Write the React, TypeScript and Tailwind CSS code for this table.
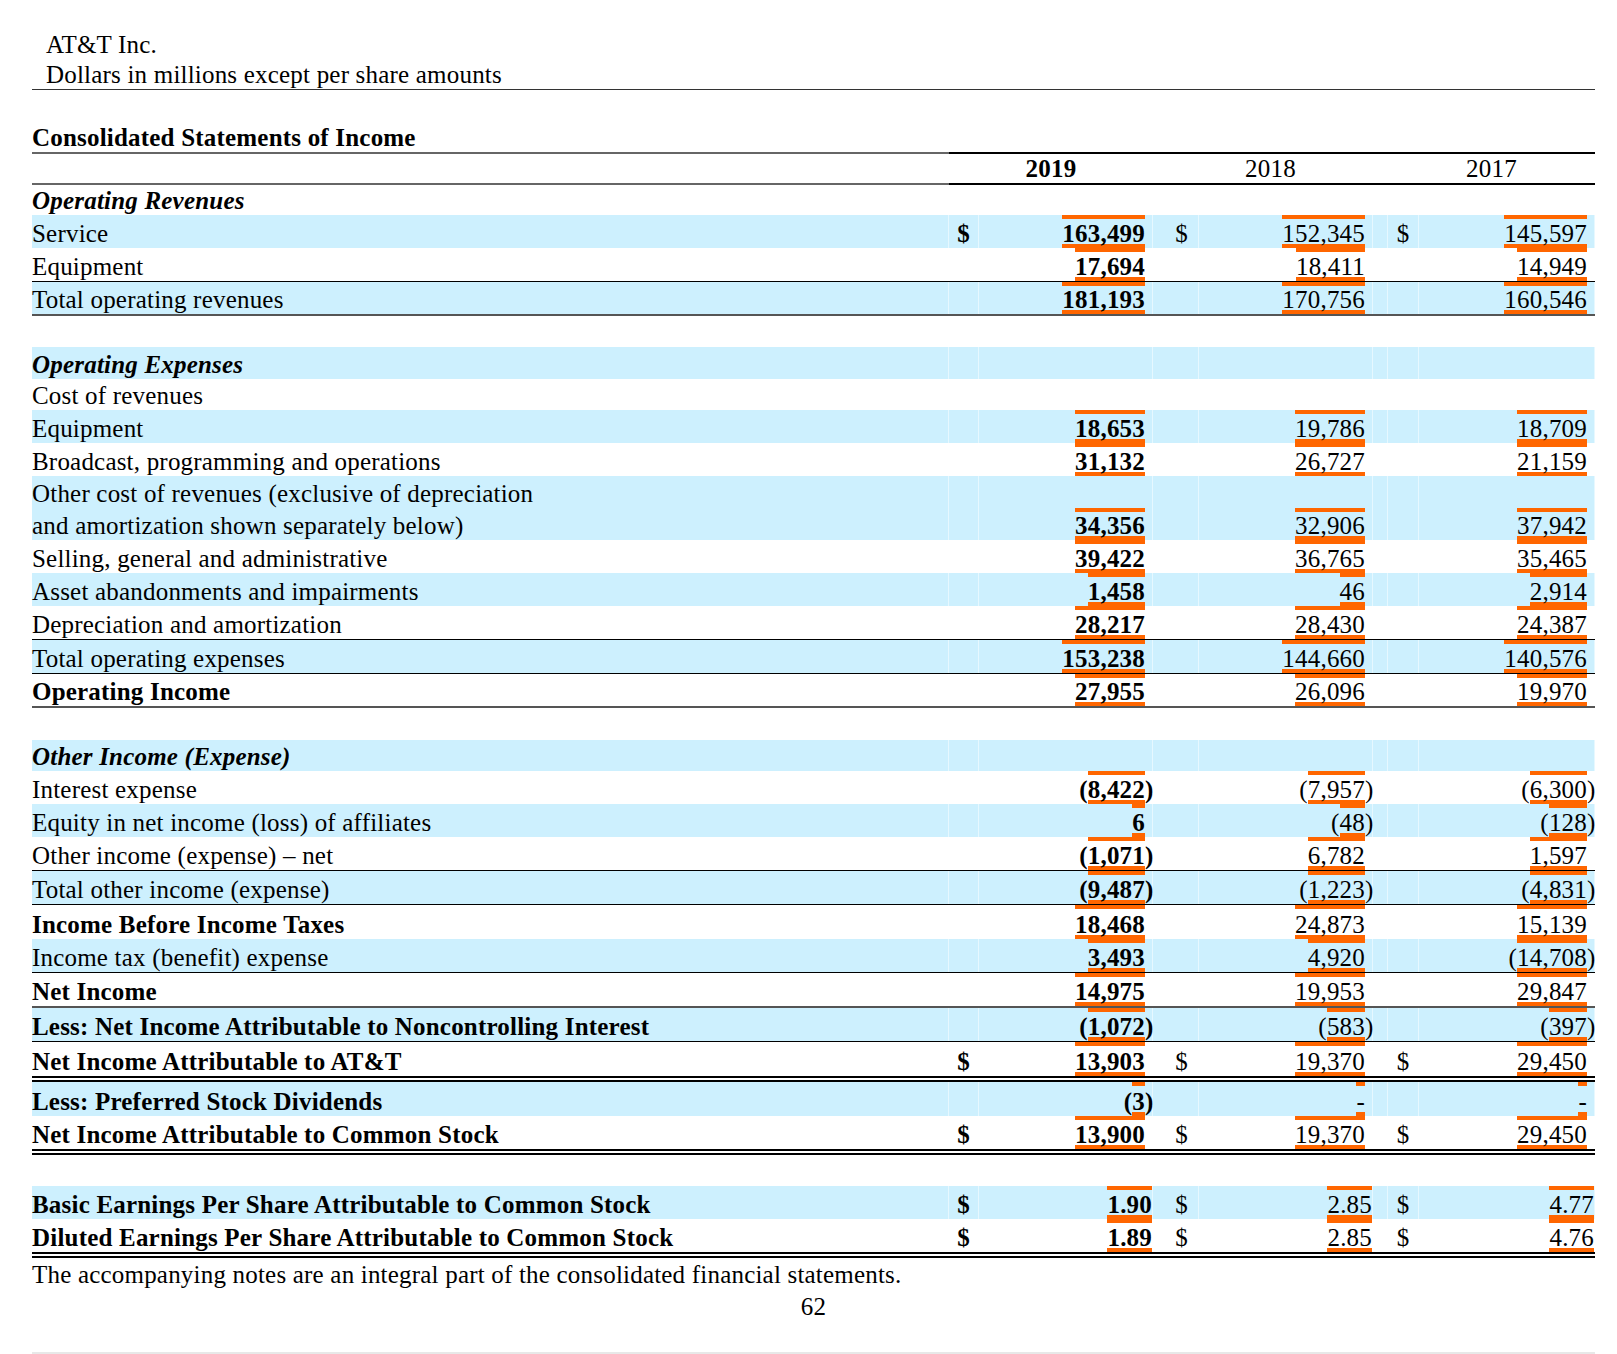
import React from 'react';

type Row = {
  label: string;
  kind?: 'head' | 'bold';
  blue?: boolean;
  h: string;
  line?: 'single' | 'gray' | 'double';
  vals?: [string, string, string];
  dollar?: boolean;
  eps?: boolean;
};

const rows: Row[] = [
  { label: 'Operating Revenues', kind: 'head', h: 'h-[30px]' },
  { label: 'Service', blue: true, h: 'h-[33px]', dollar: true, vals: ['163,499', '152,345', '145,597'] },
  { label: 'Equipment', h: 'h-[34px]', line: 'single', vals: ['17,694', '18,411', '14,949'] },
  { label: 'Total operating revenues', blue: true, h: 'h-[34px]', line: 'gray', vals: ['181,193', '170,756', '160,546'] },
  { label: '', h: 'h-[31px]' },
  { label: 'Operating Expenses', kind: 'head', blue: true, h: 'h-[32px]' },
  { label: 'Cost of revenues', h: 'h-[31px]' },
  { label: 'Equipment', blue: true, h: 'h-[33px]', vals: ['18,653', '19,786', '18,709'] },
  { label: 'Broadcast, programming and operations', h: 'h-[33px]', vals: ['31,132', '26,727', '21,159'] },
  { label: 'Other cost of revenues (exclusive of depreciation', blue: true, h: 'h-[32px]' },
  { label: 'and amortization shown separately below)', blue: true, h: 'h-[32px]', vals: ['34,356', '32,906', '37,942'] },
  { label: 'Selling, general and administrative', h: 'h-[33px]', vals: ['39,422', '36,765', '35,465'] },
  { label: 'Asset abandonments and impairments', blue: true, h: 'h-[33px]', vals: ['1,458', '46', '2,914'] },
  { label: 'Depreciation and amortization', h: 'h-[34px]', line: 'single', vals: ['28,217', '28,430', '24,387'] },
  { label: 'Total operating expenses', blue: true, h: 'h-[34px]', line: 'single', vals: ['153,238', '144,660', '140,576'] },
  { label: 'Operating Income', kind: 'bold', h: 'h-[34px]', line: 'gray', vals: ['27,955', '26,096', '19,970'] },
  { label: '', h: 'h-[32px]' },
  { label: 'Other Income (Expense)', kind: 'head', blue: true, h: 'h-[31px]' },
  { label: 'Interest expense', h: 'h-[33px]', vals: ['(8,422)', '(7,957)', '(6,300)'] },
  { label: 'Equity in net income (loss) of affiliates', blue: true, h: 'h-[33px]', vals: ['6', '(48)', '(128)'] },
  { label: 'Other income (expense) – net', h: 'h-[34px]', line: 'single', vals: ['(1,071)', '6,782', '1,597'] },
  { label: 'Total other income (expense)', blue: true, h: 'h-[34px]', line: 'single', vals: ['(9,487)', '(1,223)', '(4,831)'] },
  { label: 'Income Before Income Taxes', kind: 'bold', h: 'h-[34px]', vals: ['18,468', '24,873', '15,139'] },
  { label: 'Income tax (benefit) expense', blue: true, h: 'h-[34px]', line: 'single', vals: ['3,493', '4,920', '(14,708)'] },
  { label: 'Net Income', kind: 'bold', h: 'h-[35px]', line: 'gray', vals: ['14,975', '19,953', '29,847'] },
  { label: 'Less: Net Income Attributable to Noncontrolling Interest', kind: 'bold', blue: true, h: 'h-[34px]', line: 'single', vals: ['(1,072)', '(583)', '(397)'] },
  { label: 'Net Income Attributable to AT&T', kind: 'bold', h: 'h-[34px]', line: 'double', dollar: true, vals: ['13,903', '19,370', '29,450'] },
  { label: 'Less: Preferred Stock Dividends', kind: 'bold', blue: true, h: 'h-[34px]', vals: ['(3)', '-', '-'] },
  { label: 'Net Income Attributable to Common Stock', kind: 'bold', h: 'h-[33px]', line: 'double', dollar: true, vals: ['13,900', '19,370', '29,450'] },
  { label: '', h: 'h-[31px]' },
  { label: 'Basic Earnings Per Share Attributable to Common Stock', kind: 'bold', blue: true, h: 'h-[33px]', dollar: true, eps: true, vals: ['1.90', '2.85', '4.77'] },
  { label: 'Diluted Earnings Per Share Attributable to Common Stock', kind: 'bold', h: 'h-[33px]', line: 'double', dollar: true, eps: true, vals: ['1.89', '2.85', '4.76'] },
];

// one entry per year: group width, dollar-cell layout, trailing spacer
const groups = [
  { w: 'w-[204px]', dw: 'w-[30px] justify-center', spacer: false },
  { w: 'w-[235px]', dw: 'w-[46px] justify-end pr-[10px]', spacer: true },
  { w: 'w-[207px]', dw: 'w-[31px] justify-center', spacer: false },
];

const txt = 'flex items-end pb-[4.5px] leading-[20px]';
const sep = 'border-r border-white/50';

const Amount: React.FC<{ v: string }> = ({ v }) => {
  const neg = v.startsWith('(');
  const core = v.replace(/[()]/g, '');
  return (
    <div className="flex flex-1 justify-end">
      {neg && <span className={txt}>(</span>}
      <span className="flex items-end border-y-4 border-[#ff6600] pb-[0.5px] leading-[20px]">{core}</span>
    </div>
  );
};

const lineCls = (l?: Row['line']) => {
  if (l === 'single') return 'border-b border-black';
  if (l === 'gray') return 'border-b-2 border-[#555]';
  return '';
};

const TableRow: React.FC<{ r: Row }> = ({ r }) => {
  const labelCls =
    r.kind === 'head' ? 'font-bold italic' : r.kind === 'bold' ? 'font-bold' : '';
  return (
    <>
      <div className={`flex ${r.h} ${r.blue ? 'bg-[#cdf0fe]' : ''} ${lineCls(r.line)}`}>
        <div className={`w-[917px] ${txt} ${sep} ${labelCls} whitespace-nowrap`}>{r.label}</div>
        {groups.map((g, i) => {
          const v = r.vals?.[i];
          const bold = i === 0 ? 'font-bold' : '';
          return (
            <div key={i} className={`flex ${g.w} ${bold}`}>
              <div className={`flex ${g.dw} ${txt} ${sep}`}>{r.dollar ? '$' : ''}</div>
              {r.eps ? (
                <div className={`flex flex-1 ${sep}`}>{v && <Amount v={v} />}</div>
              ) : (
                <>
                  <div className="flex flex-1">{v && <Amount v={v} />}</div>
                  <div className={`w-[8px] ${txt} ${sep}`}>{v && v.endsWith(')') ? ')' : ''}</div>
                </>
              )}
              {g.spacer && <div className={`w-[15px] ${sep}`} />}
            </div>
          );
        })}
      </div>
      {r.line === 'double' && <div className="h-[6px] border-y-2 border-black" />}
    </>
  );
};

export default function App() {
  return (
    <div className="min-h-screen bg-white font-['Liberation_Serif','Times_New_Roman',serif] text-[25px] tracking-[0.2px] text-black">
      <div className="ml-[32px] w-[1563px]">
        <div className="border-b border-[#333] pl-[14px] pt-[30px]">
          <div className="leading-[30px]">AT&amp;T Inc.</div>
          <div className="leading-[29px]">Dollars in millions except per share amounts</div>
        </div>

        <div className="flex h-[64px]">
          <div className={`w-[917px] border-b-2 border-[#666] font-bold ${txt}`}>Consolidated Statements of Income</div>
          <div className="flex-1 border-b-2 border-black" />
        </div>

        <div className="flex h-[31px]">
          <div className="w-[917px] border-b-2 border-[#666]" />
          {['2019', '2018', '2017'].map((y, i) => (
            <div
              key={y}
              className={`${groups[i].w} justify-center border-b-2 border-black ${txt} ${i === 0 ? 'font-bold' : ''}`}
            >
              {y}
            </div>
          ))}
        </div>

        {rows.map((r, i) => (
          <TableRow key={i} r={r} />
        ))}

        <div className="pt-[1.5px] leading-[30px]">
          The accompanying notes are an integral part of the consolidated financial statements.
        </div>
        <div className="mt-[2px] text-center leading-[30px]">62</div>
        <div className="mt-[30px] border-t-2 border-[#e8e8e8]" />
      </div>
    </div>
  );
}
